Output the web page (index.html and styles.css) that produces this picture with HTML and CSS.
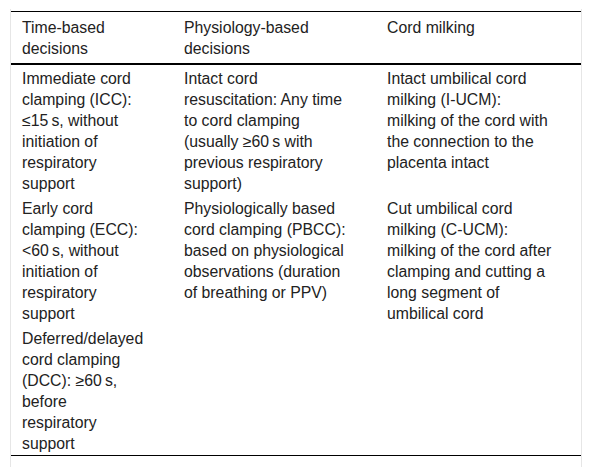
FILE: index.html
```html
<!DOCTYPE html>
<html lang="en">
<head>
    <meta charset="UTF-8">
    <title>Cord clamping strategies</title>
    <link rel="stylesheet" href="styles.css">
</head>
<body>
    <div id="table-container">
        <table id="clamping-table">
            <colgroup>
                <col class="col-time">
                <col class="col-physio">
                <col class="col-milking">
            </colgroup>
            <thead>
                <tr>
                    <th>Time-based decisions</th>
                    <th>Physiology-based decisions</th>
                    <th>Cord milking</th>
                </tr>
            </thead>
            <tbody>
                <tr>
                    <td>Immediate cord clamping (ICC): ≤15&#8201;s, without initiation of respiratory support</td>
                    <td>Intact cord resuscitation: Any time to cord clamping (usually ≥60&#8201;s with previous respiratory support)</td>
                    <td>Intact umbilical cord milking (I-UCM): milking of the cord with the connection to the placenta intact</td>
                </tr>
                <tr>
                    <td>Early cord clamping (ECC): &lt;60&#8201;s, without initiation of respiratory support</td>
                    <td>Physiologically based cord clamping (PBCC): based on physiological observations (duration of breathing or PPV)</td>
                    <td>Cut umbilical cord milking (C-UCM): milking of the cord after clamping and cutting a long segment of umbilical cord</td>
                </tr>
                <tr>
                    <td>Deferred/delayed cord clamping (DCC): ≥60&#8201;s, before respiratory support</td>
                    <td></td>
                    <td></td>
                </tr>
            </tbody>
        </table>
    </div>
</body>
</html>
```

FILE: styles.css
```css
body {
    margin: 0;
    font-family: "Liberation Sans", Arial, sans-serif;
    background-color: #ffffff;
    color: #222222;
}
#table-container {
    margin: 9px 0 0 10px;
    width: 570px;
    min-height: 458px;
    padding-top: 2px;
    border-left: 1px solid #e6e6e6;
    border-right: 1px solid #e6e6e6;
}
#clamping-table {
    width: 570px;
    table-layout: fixed;
    border-collapse: collapse;
    border-top: 1px solid #000000;
    border-bottom: 1px solid #000000;
    font-size: 15.8px;
    line-height: 21px;
}
.col-time {
    width: 162px;
}
.col-physio {
    width: 203px;
}
.col-milking {
    width: 205px;
}
#clamping-table th {
    font-weight: normal;
    text-align: left;
    vertical-align: top;
    padding: 5px 28px 4px 11px;
    border-bottom: 2px solid #000000;
}
#clamping-table td {
    vertical-align: top;
    padding: 3px 28px 1px 11px;
}
```
